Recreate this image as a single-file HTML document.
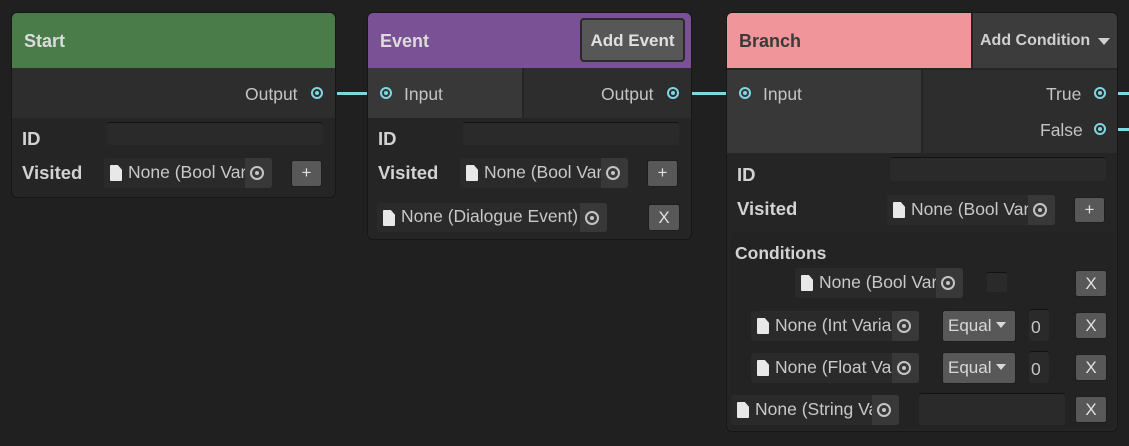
<!DOCTYPE html>
<html><head><style>
*{box-sizing:border-box;margin:0;padding:0}
body{width:1129px;height:446px;background:#202020;position:relative;overflow:hidden;font-family:"Liberation Sans",sans-serif;color:#c4c4c4}
.a{position:absolute}
.node{position:absolute;background:#252525;border:1px solid #171717;border-radius:6px;overflow:hidden}
.t{position:absolute;font-size:17.5px;line-height:20px;white-space:nowrap}
.b{font-weight:bold;color:#d2d2d2;font-size:18.5px}
.tf{position:absolute;background:#2a2a2a;border-top:1px solid #111;border-radius:3px}
.obj{position:absolute;background:#2a2a2a;border-radius:3px;overflow:hidden}
.obj .doc{position:absolute;left:6px;top:7px;width:12px;height:16px;background:#e8e8e8;border-radius:1px;clip-path:polygon(0 0,65% 0,100% 30%,100% 100%,0 100%)}
.obj .tx{position:absolute;left:24px;top:4px;font-size:17.5px;line-height:20px;white-space:nowrap;color:#c8c8c8}
.obj .pk{position:absolute;right:0;top:0;bottom:0;width:27px;background:#383838}
.obj .pk:before{content:"";position:absolute;left:5px;top:8px;width:14px;height:14px;border:2px solid #c4c4c4;border-radius:50%;box-sizing:border-box}
.obj .pk:after{content:"";position:absolute;left:10px;top:13px;width:4px;height:4px;background:#c4c4c4;border-radius:50%}
.btn{position:absolute;background:#585858;border:1px solid #1e1e1e;border-radius:3px;color:#e0e0e0;text-align:center;font-size:17px}
.port{position:absolute;width:12px;height:12px;border:2px solid #7fd6e0;border-radius:50%}
.port:after{content:"";position:absolute;left:2px;top:2px;width:4px;height:4px;background:#7fd6e0;border-radius:50%}
.ln{position:absolute;height:3px;background:#7fd6e0}
</style></head><body>
<div class="ln" style="left:337px;top:92px;width:31px"></div>
<div class="ln" style="left:691px;top:92px;width:36px"></div>
<div class="ln" style="left:1117px;top:92px;width:12px"></div>
<div class="ln" style="left:1117px;top:128px;width:12px"></div>

<div class="node" style="left:11px;top:12px;width:325px;height:186px">
  <div class="a" style="left:0;top:0;width:325px;height:55px;background:#4a7c49"></div>
  <div class="a" style="left:0;top:55px;width:325px;height:50px;background:#2d2d2d"></div>
</div>
<div class="t b" style="left:24px;top:31px;color:#dcdcdc;font-size:18px">Start</div>
<div class="t" style="left:245px;top:84px">Output</div>
<div class="port" style="left:311px;top:87px"></div>
<div class="t b" style="left:22px;top:129px">ID</div>
<div class="tf" style="left:107px;top:122px;width:216px;height:23px"></div>
<div class="t b" style="left:22px;top:163px">Visited</div>
<div class="obj" style="left:104px;top:158px;width:168px;height:30px"><div class="doc"></div><div class="tx">None (Bool Var</div><div class="pk"></div></div>
<div class="btn" style="left:291px;top:160px;width:31px;height:27px;line-height:24px">+</div>

<div class="node" style="left:367px;top:12px;width:325px;height:228px">
  <div class="a" style="left:0;top:0;width:325px;height:55px;background:#7a5195"></div>
  <div class="a" style="left:0;top:55px;width:154px;height:50px;background:#383838"></div>
  <div class="a" style="left:156px;top:55px;width:169px;height:50px;background:#2d2d2d"></div>
</div>
<div class="t b" style="left:380px;top:31px;color:#dcdcdc;font-size:18px">Event</div>
<div class="btn" style="left:580px;top:18px;width:105px;height:44px;line-height:42px;font-weight:bold;font-size:17px;background:#575757;border:2px solid #2a2a2a;border-radius:4px">Add Event</div>
<div class="port" style="left:380px;top:87px"></div>
<div class="t" style="left:404px;top:84px">Input</div>
<div class="t" style="left:601px;top:84px">Output</div>
<div class="port" style="left:667px;top:87px"></div>
<div class="t b" style="left:378px;top:129px">ID</div>
<div class="tf" style="left:463px;top:122px;width:216px;height:23px"></div>
<div class="t b" style="left:378px;top:163px">Visited</div>
<div class="obj" style="left:460px;top:158px;width:168px;height:30px"><div class="doc"></div><div class="tx">None (Bool Var</div><div class="pk"></div></div>
<div class="btn" style="left:647px;top:160px;width:31px;height:27px;line-height:24px">+</div>
<div class="obj" style="left:377px;top:203px;width:230px;height:29px"><div class="doc"></div><div class="tx" style="top:3px">None (Dialogue Event)</div><div class="pk"></div></div>
<div class="btn" style="left:648px;top:204px;width:32px;height:27px;line-height:25px">X</div>

<div class="node" style="left:726px;top:12px;width:392px;height:420px">
  <div class="a" style="left:0;top:0;width:244px;height:55px;background:#f09599"></div>
  <div class="a" style="left:246px;top:0;width:146px;height:55px;background:#3c3c3c"></div>
  <div class="a" style="left:0;top:57px;width:194px;height:83px;background:#383838"></div>
  <div class="a" style="left:196px;top:57px;width:196px;height:83px;background:#2d2d2d"></div>
  <div class="a" style="left:4px;top:220px;width:383px;height:196px;background:#232323;border-radius:4px"></div>
</div>
<div class="t b" style="left:739px;top:31px;color:#3a3a3a;font-size:18px">Branch</div>
<div class="t b" style="left:980px;top:31px;font-size:16px;color:#d0d0d0">Add Condition</div>
<div class="a" style="left:1098px;top:38px;width:0;height:0;border-left:6px solid transparent;border-right:6px solid transparent;border-top:7px solid #d0d0d0"></div>
<div class="port" style="left:739px;top:87px"></div>
<div class="t" style="left:763px;top:84px">Input</div>
<div class="t" style="left:1046px;top:84px">True</div>
<div class="port" style="left:1094px;top:87px"></div>
<div class="t" style="left:1040px;top:120px">False</div>
<div class="port" style="left:1094px;top:123px"></div>
<div class="t b" style="left:737px;top:165px">ID</div>
<div class="tf" style="left:890px;top:157px;width:216px;height:24px"></div>
<div class="t b" style="left:737px;top:199px">Visited</div>
<div class="obj" style="left:887px;top:195px;width:168px;height:30px"><div class="doc"></div><div class="tx">None (Bool Var</div><div class="pk"></div></div>
<div class="btn" style="left:1074px;top:197px;width:31px;height:26px;line-height:24px">+</div>
<div class="t b" style="left:735px;top:243px;font-size:17.5px">Conditions</div>

<div class="obj" style="left:795px;top:268px;width:168px;height:30px"><div class="doc"></div><div class="tx">None (Bool Var</div><div class="pk"></div></div>
<div class="a" style="left:987px;top:272px;width:20px;height:20px;background:#2a2a2a;border-top:1px solid #111;border-radius:2px"></div>
<div class="btn" style="left:1075px;top:270px;width:32px;height:27px;line-height:25px">X</div>

<div class="obj" style="left:751px;top:311px;width:168px;height:30px"><div class="doc"></div><div class="tx">None (Int Varia</div><div class="pk"></div></div>
<div class="btn" style="left:942px;top:310px;width:74px;height:32px;line-height:30px;text-align:left;padding-left:5px;color:#d8d8d8">Equal</div>
<div class="a" style="left:996px;top:322px;width:0;height:0;border-left:5px solid transparent;border-right:5px solid transparent;border-top:6px solid #d8d8d8"></div>
<div class="tf" style="left:1029px;top:309px;width:20px;height:32px"><div class="t" style="left:2px;top:7px">0</div></div>
<div class="btn" style="left:1075px;top:312px;width:32px;height:27px;line-height:25px">X</div>

<div class="obj" style="left:751px;top:353px;width:168px;height:30px"><div class="doc"></div><div class="tx">None (Float Va</div><div class="pk"></div></div>
<div class="btn" style="left:942px;top:352px;width:74px;height:32px;line-height:30px;text-align:left;padding-left:5px;color:#d8d8d8">Equal</div>
<div class="a" style="left:996px;top:364px;width:0;height:0;border-left:5px solid transparent;border-right:5px solid transparent;border-top:6px solid #d8d8d8"></div>
<div class="tf" style="left:1029px;top:351px;width:20px;height:32px"><div class="t" style="left:2px;top:7px">0</div></div>
<div class="btn" style="left:1075px;top:354px;width:32px;height:27px;line-height:25px">X</div>

<div class="obj" style="left:731px;top:395px;width:168px;height:30px"><div class="doc"></div><div class="tx">None (String Va</div><div class="pk"></div></div>
<div class="tf" style="left:919px;top:393px;width:146px;height:32px"></div>
<div class="btn" style="left:1075px;top:396px;width:32px;height:27px;line-height:25px">X</div>
</body></html>
